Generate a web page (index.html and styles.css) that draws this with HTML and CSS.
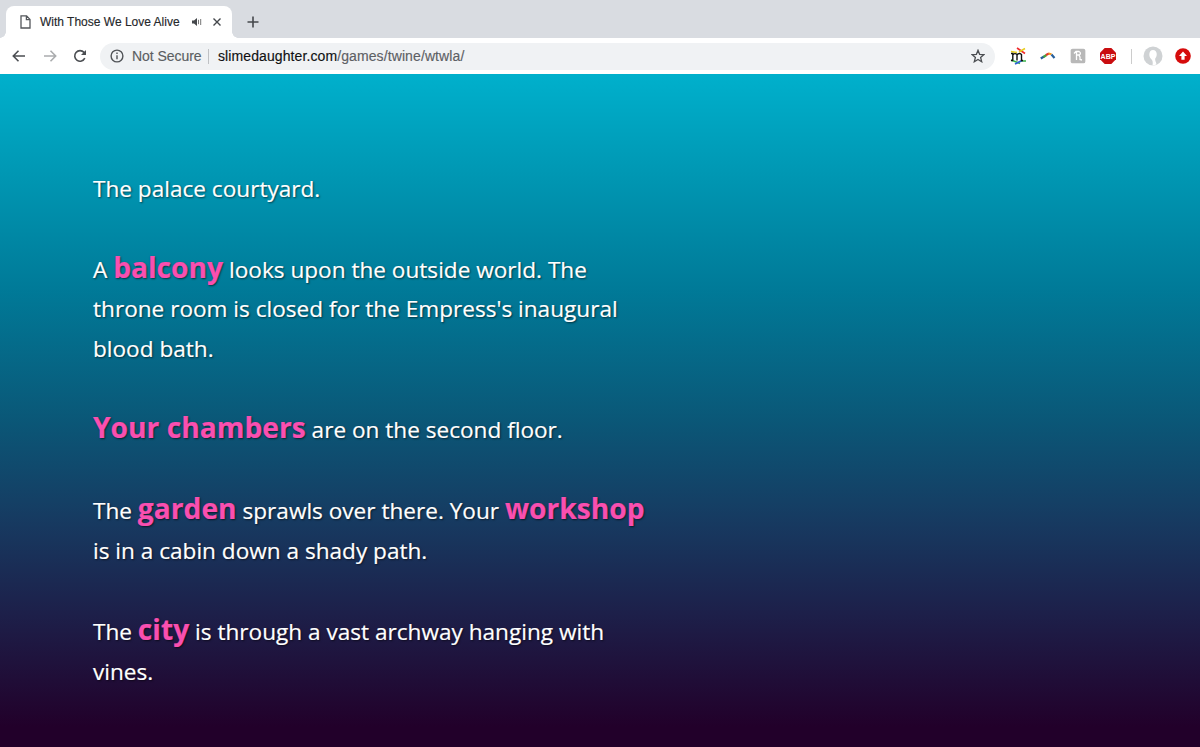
FILE: index.html
```html
<!DOCTYPE html>
<html lang="en">
<head>
<meta charset="utf-8">
<title>With Those We Love Alive</title>
<link rel="stylesheet" href="styles.css">
</head>
<body>
<div class="browser">
  <header class="tabs">
    <div class="tab">
      <svg class="page-icon" width="11" height="14" viewBox="0 0 11 14"><path d="M1 .8h5.6L10 4.400V13H1zM6.400 1v3.700H10"/></svg>
      <span class="tab-title">With Those We Love Alive</span>
      <svg class="sound" width="10" height="8" viewBox="0 0 10 8"><path class="solid" d="M0 2.600h2L5 0v8L2 5.400H0z"/><path d="M6.500 1.800v4.400M8.700 1v6"/></svg>
      <svg class="close" width="8" height="8" viewBox="0 0 8 8"><path d="M.5.5l7 7M7.500.5l-7 7"/></svg>
    </div>
    <svg class="plus" width="12" height="12" viewBox="0 0 12 12"><path d="M6 .5v11M.5 6h11"/></svg>
  </header>
  <nav class="toolbar">
    <svg class="nav-icon back" width="14" height="12" viewBox="0 0 14 12"><path d="M13 6H1.500M6.500.8L1.300 6l5.200 5.200"/></svg>
    <svg class="nav-icon forward" width="14" height="12" viewBox="0 0 14 12"><path d="M1 6h11.500M7.500.8L12.700 6l-5.200 5.200"/></svg>
    <svg class="nav-icon reload" width="14" height="14" viewBox="0 0 14 14"><path d="M11.800 9.200A5.300 5.300 0 1 1 11 3.400L12 4.500"/><path class="solid" d="M13 1v5H8z"/></svg>
    <div class="address">
      <svg class="info" width="14" height="14" viewBox="0 0 14 14"><circle cx="7" cy="7" r="5.900"/><path d="M7 6.300v4M7 3.600v1.500"/></svg>
      <span class="secure">Not Secure</span>
      <span class="rule"></span>
      <span class="url"><b>slimedaughter.com</b>/games/twine/wtwla/</span>
      <svg class="star" width="14" height="14" viewBox="0 0 14 14"><path d="M7 1.300l1.600 4 4.300.3-3.300 2.800 1.100 4.300L7 10.400l-3.700 2.300 1.100-4.300L1.100 5.600l4.300-.3z"/></svg>
    </div>
    <div class="extensions">
      <svg class="ext m" width="18" height="18" viewBox="0 0 18 18"><path stroke="#ef2b2d" d="M8 1l8 5.500"/><path stroke="#e8cf20" d="M2 4.500l6 1M10 5l6-3.500"/><path stroke="#37b34a" d="M2 13l9 3.500M12 14h5"/><path stroke="#2f62d9" d="M6 17l7-3.500"/><path class="letter" d="M2 6.500h1.800v7M3.800 8q2-2.500 4.200-.5v6M8 8q2-2.500 4.500-.5v6h1.500M2 13.500h2"/></svg>
      <svg class="ext arc" width="16" height="10" viewBox="0 0 16 10"><path stroke="#285f9b" d="M.8 7.500L4 5.500"/><path stroke="#4aa33c" d="M3.500 6l3-2"/><path stroke="#e2352e" d="M6 4l3-1.500"/><path stroke="#f39a1f" d="M8.500 2.500l3 .8"/><path stroke="#285f9b" d="M11.500 3.500l3 3.500"/></svg>
      <svg class="ext honey" width="16" height="16" viewBox="0 0 16 16"><rect width="16" height="16" rx="2.500" fill="#b8b8b8"/><path d="M4 5.500l2-2h3q2.500 1.500.5 3.500H6.500M6.500 3.500V12M9 7.500q1.500 1 1 4l2 .5"/></svg>
      <svg class="ext abp" width="16" height="16" viewBox="0 0 16 16"><path fill="#c90d10" d="M4.700 0h6.600L16 4.700v6.600L11.300 16H4.700L0 11.300V4.700z"/><text x="8" y="10.600">ABP</text></svg>
    </div>
    <span class="divider"></span>
    <svg class="avatar" width="20" height="20" viewBox="0 0 20 20"><circle cx="10" cy="10" r="9.500" fill="#cfd2d4"/><path fill="#fff" d="M10 4c4.600 0 4.600 6.500 2.200 8.500-.4 2 .8 3 1.300 6.100a9.500 9.500 0 0 1-4 .8c.6-3 .3-5-1.300-6.500C5.500 11 5.500 4 10 4z"/></svg>
    <svg class="update" width="16" height="16" viewBox="0 0 16 16"><circle cx="8" cy="8" r="7.800" fill="#d60c0c"/><path fill="#fff" d="M8 3.500l4 4.500H9.600v3.700H6.400V8H4z"/></svg>
  </nav>
  <main class="story">
    <div class="passage">
      <p>The palace courtyard.</p>
      <p>A <a class="link">balcony</a> looks upon the outside world. The<br>throne room is closed for the Empress's inaugural<br>blood bath.</p>
      <p><a class="link">Your chambers</a> are on the second floor.</p>
      <p>The <a class="link">garden</a> sprawls over there. Your <a class="link">workshop</a><br>is in a cabin down a shady path.</p>
      <p>The <a class="link">city</a> is through a vast archway hanging with<br>vines.</p>
    </div>
  </main>
</div>
</body>
</html>
```
FILE: styles.css
```css
* { box-sizing: border-box; }
body { margin: 0; }
svg { display: block; flex: none; fill: none; stroke-width: 1.6; }
.browser { width: 1200px; height: 747px; display: flex; flex-direction: column; overflow: hidden; font-family: "Liberation Sans", Arial, sans-serif; }
.tabs { height: 38px; flex: none; display: flex; align-items: flex-start; padding: 6px 0 0 6px; background: #d9dce1; }
.tab { position: relative; width: 226px; height: 32px; display: flex; align-items: center; padding-left: 14px; background: #fff; border-radius: 8px 8px 0 0; }
.tab::before, .tab::after { content: ""; position: absolute; bottom: 0; width: 6px; height: 6px; }
.tab::before { left: -6px; background: radial-gradient(circle at 0 0, transparent 5.5px, #fff 6px); }
.tab::after { right: -6px; background: radial-gradient(circle at 100% 0, transparent 5.5px, #fff 6px); }
.page-icon { stroke: #54575b; stroke-width: 1.3; }
.tab-title { width: 140px; margin-left: 9px; font-size: 12px; color: #26282b; white-space: nowrap; -webkit-text-stroke: 0.15px; }
.sound { margin-left: 12px; stroke: #777; stroke-width: 1; }
.sound .solid { fill: #45484c; stroke: none; }
.close { margin-left: 11px; stroke: #45484c; stroke-width: 1.4; }
.plus { margin: 10px 0 0 15px; stroke: #45484c; }
.toolbar { height: 36px; flex: none; display: flex; align-items: center; padding-left: 12px; background: #fff; }
.nav-icon { stroke: #4b4e52; }
.forward { margin-left: 17px; stroke: #aaacae; }
.reload { margin-left: 16px; }
.reload .solid { fill: #4b4e52; stroke: none; }
.address { width: 895px; height: 27px; display: flex; align-items: center; margin-left: 13px; padding-left: 10px; border-radius: 14px; background: #f0f2f4; font-size: 14px; white-space: nowrap; -webkit-text-stroke: 0.15px; }
.info { stroke: #505357; stroke-width: 1.4; }
.secure { width: 69px; margin-left: 8px; color: #5b5e62; letter-spacing: -0.05px; }
.rule { width: 1px; height: 15px; margin-left: 7px; background: #bfc1c4; }
.url { margin-left: 9px; color: #5d6064; letter-spacing: 0.1px; }
.url b { font-weight: 400; color: #101112; }
.star { margin: 0 10px 0 auto; stroke: #4b4e52; stroke-width: 1.3; }
.extensions { display: flex; align-items: center; margin-left: 14px; }
.m .letter { stroke: #111; stroke-width: 1.4; }
.arc { margin-left: 13px; stroke-width: 2.2; }
.honey { margin-left: 14px; stroke: #fff; stroke-width: 1.3; }
.abp { margin-left: 14px; }
.abp text { font: bold 7px "Liberation Sans", sans-serif; fill: #fff; text-anchor: middle; }
.divider { width: 1px; height: 15px; margin-left: 15px; background: #ccc; }
.avatar { margin-left: 11px; }
.update { margin-left: 12px; }
.story { flex: 1; padding: 94.5px 93px 0; background: linear-gradient(#00b0cc 0%, #0097b3 15%, #007a98 32%, #0a5878 51%, #173960 67%, #1d204a 80%, #22002a 97%, #22002a 100%); }
.passage { font-family: "Open Sans", sans-serif; font-size: 22.6px; line-height: 39.6px; color: #fff; white-space: nowrap; text-shadow: 1px 1px 2px rgba(0,0,0,.6); -webkit-text-stroke: 0.2px; }
.passage p { margin: 0 0 39.6px; }
.link { font-size: 28.2px; font-weight: 700; color: #f94fb0; }
```
